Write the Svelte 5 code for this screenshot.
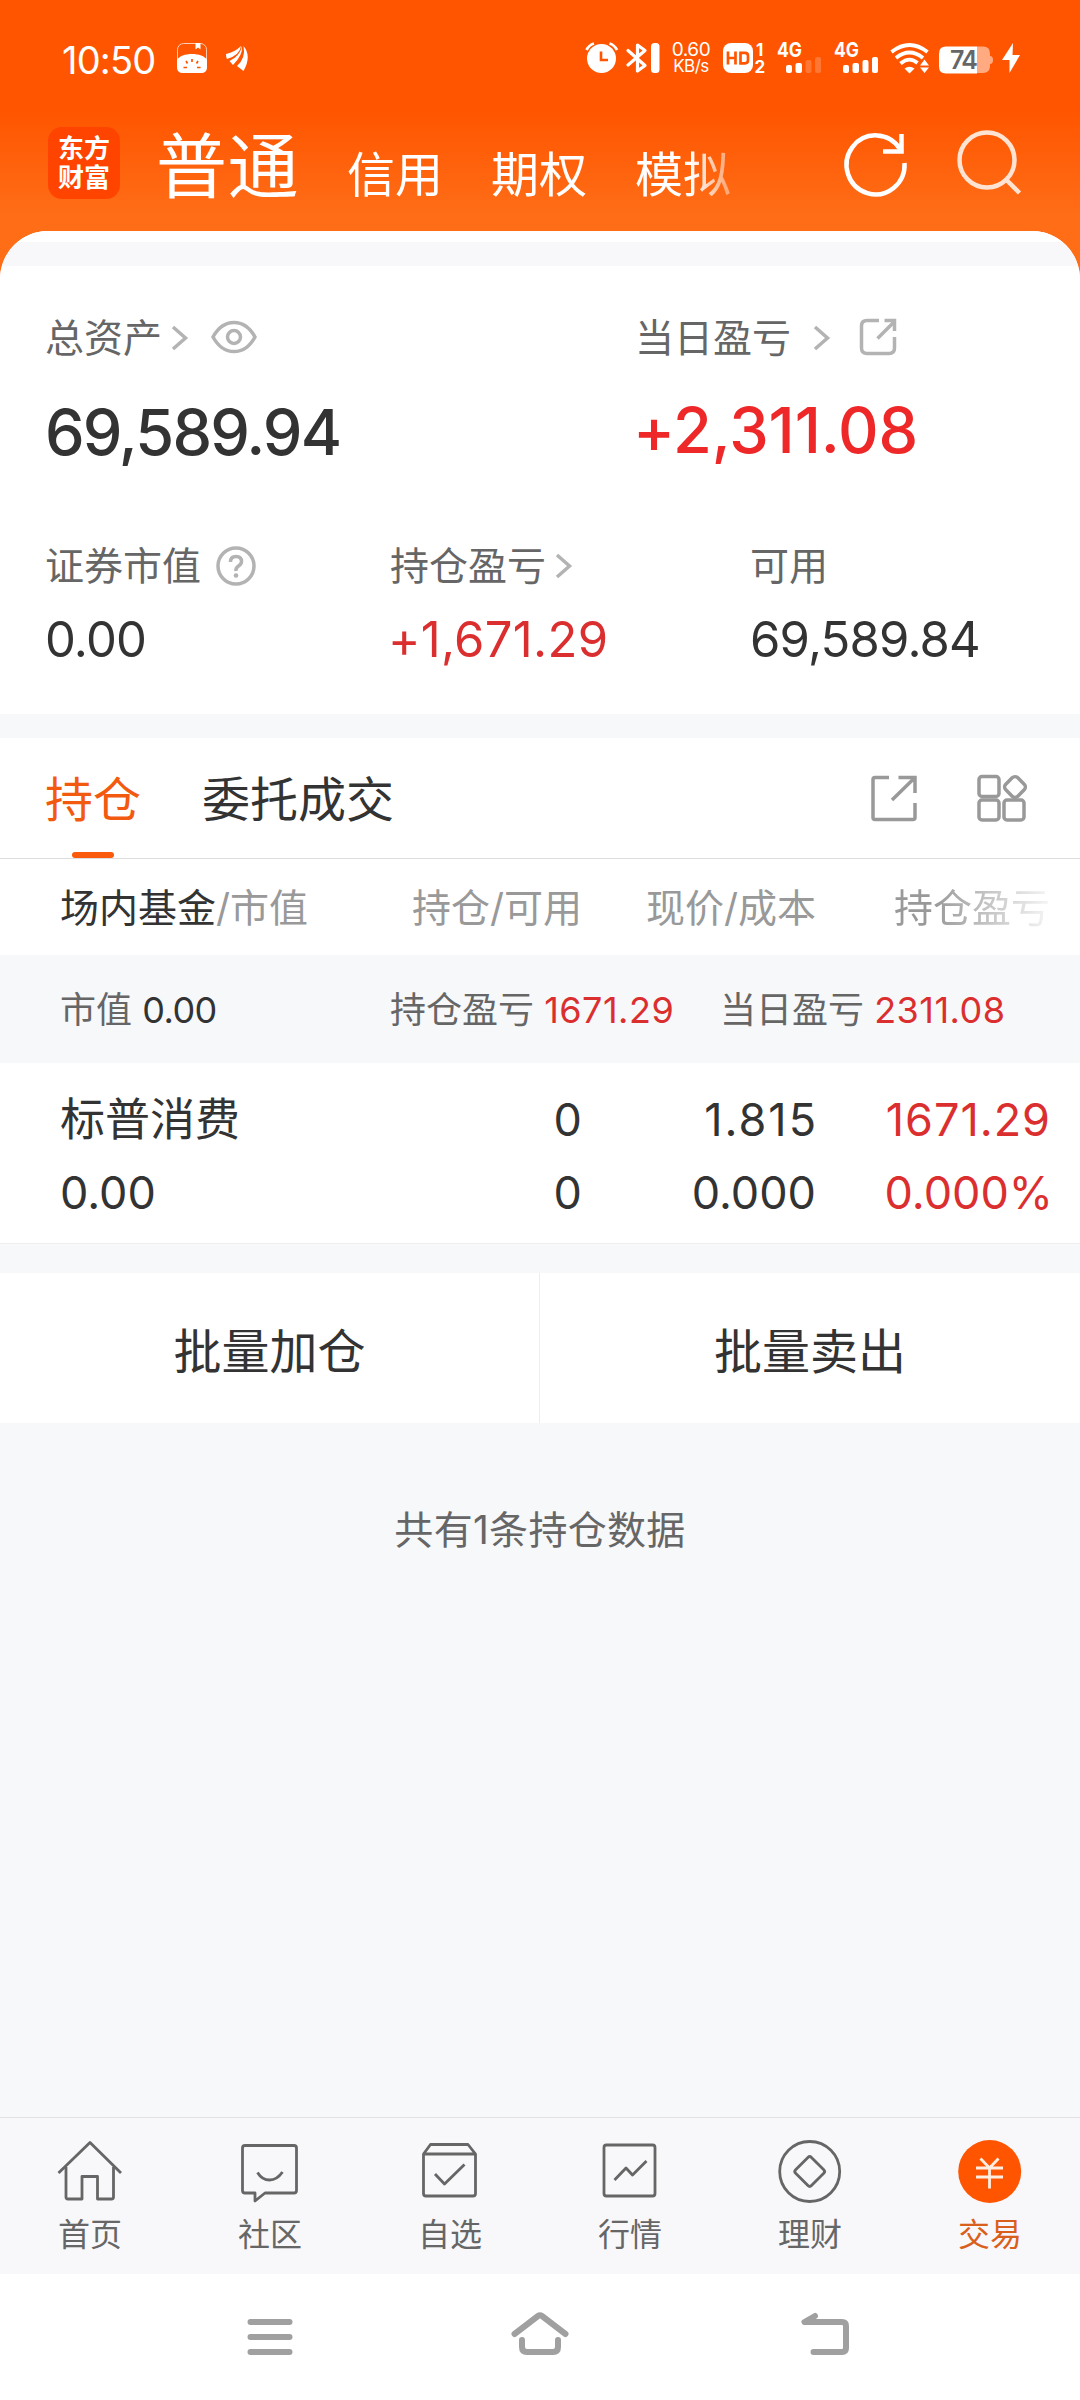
<script>
  let accounts = ['信用', '期权', '模拟'];
  let activeTab = $state('持仓');
  let activeNav = $state('交易');

  const positions = [
    { name: '标普消费', value: '0.00', held: '0', usable: '0', price: '1.815', cost: '0.000', profit: '1671.29', rate: '0.000%' }
  ];

  const navItems = ['首页', '社区', '自选', '行情', '理财', '交易'];
</script>

{#snippet chevron()}
  <svg class="chevron" width="17" height="28" viewBox="0 0 17 28">
    <path d="M2 3 L14.5 14 L2 25" />
  </svg>
{/snippet}

{#snippet signal(strength)}
  <svg class="signal" width="46" height="32" viewBox="0 0 46 32">
    <text x="0" y="15" textLength="25" lengthAdjust="spacingAndGlyphs">4G</text>
    <rect x="9" y="23" width="6" height="8" rx="2" />
    <rect x="18.5" y="21" width="6.5" height="10" rx="2" />
    <rect x="28.5" y="18" width="6" height="13" rx="2" opacity={strength > 2 ? 1 : 0.2} />
    <rect x="38" y="15" width="6" height="16" rx="2" opacity={strength > 3 ? 1 : 0.2} />
  </svg>
{/snippet}

<div class="screen">
  <header>
    <div class="status">
      <div class="status-left">
        <span class="clock">10:50</span>
        <svg class="note" width="30" height="30" viewBox="0 0 30 30">
          <rect x="0.5" y="0.5" width="29" height="29" rx="6" fill="none" stroke="#fff" stroke-opacity="0.7" />
          <path d="M18.5 0h5v6.5l-2.5-2-2.5 2z" fill="#fff" />
          <path d="M0 17C4 9 26 9 30 17v7q0 6-6 6H6q-6 0-6-6z" fill="#fff" />
          <g stroke="#ff5500" stroke-width="1.7">
            <path d="M15 16v3M9 18l1.5 2.5M21 18l-1.5 2.5M6.5 24.5H10M20 24.5h3.5" />
          </g>
        </svg>
        <svg class="wing" width="22" height="27" viewBox="0 0 22 27">
          <path d="M0 9Q9 7 15 1Q14 10 1 14Q0 13 0 9z" />
          <path d="M16 1Q17 10 7 20L3.5 16Q14 11 16 1z" />
          <path d="M17.5 1Q26 11 17.5 26L11 21Q20 13 17.5 1z" />
        </svg>
      </div>
      <div class="status-right">
        <svg class="alarm" width="34" height="32" viewBox="0 0 34 32">
          <circle cx="16.5" cy="16.5" r="14.5" fill="#fff" />
          <path d="M1.5 8Q4 3 9 1.5M24.5 1.5Q29.5 3 32 8" fill="none" stroke="#fff" stroke-width="2.8" />
          <path d="M16 9.5V18h7" fill="none" stroke="#ff5500" stroke-width="2.6" />
        </svg>
        <svg class="bluetooth" width="34" height="32" viewBox="0 0 34 32">
          <path d="M2 8.5L19 23.5L11.5 29V3L19 8.5L2 23" fill="none" stroke="#fff" stroke-width="3.2" stroke-linejoin="round" stroke-linecap="round" />
          <rect x="25" y="1" width="8.5" height="30" rx="3.5" fill="#fff" />
        </svg>
        <div class="speed"><span>0.60</span><span class="unit">KB/s</span></div>
        <svg class="hd" width="44" height="32" viewBox="0 0 44 32">
          <rect x="0" y="1" width="30" height="30" rx="8" fill="#fff" />
          <path d="M5 9.5v13M12.5 9.5v13M5 16h7.5M17.5 10.8v10.5h4.5q3 0 3-3v-4.5q0-3-3-3z" fill="none" stroke="#ff5500" stroke-width="2.7" />
          <text x="33" y="13.5">1</text>
          <text x="31.5" y="31">2</text>
        </svg>
        {@render signal(2)}
        {@render signal(4)}
        <svg class="wifi" width="40" height="32" viewBox="0 0 40 32">
          <g fill="none" stroke="#fff" stroke-width="3.8">
            <path d="M1.5 10Q19.5-4 37.5 10" />
            <path d="M6 16Q19.5 5 33 16" />
            <path d="M10.5 21.5Q19.5 14 27.5 21" />
          </g>
          <path d="M14.5 26.5Q19.5 23 24.5 26.5L19.5 31.5z" fill="#fff" />
          <path d="M30 23.5L34.5 17.5L39 23.5zM30 25.5L34.5 31L39 25.5z" fill="#fff" />
        </svg>
        <svg class="battery" width="54" height="28" viewBox="0 0 54 28">
          <path d="M38 0.5h6q7 0 7 7v2.5q3 0 3 4t-3 4v2q0 7-7 7h-6z" fill="#ffaa80" />
          <path d="M7 0.5h31v27H7q-7 0-7-7v-13q0-7 7-7z" fill="#fff" />
          <text x="11" y="22.5" textLength="28">74</text>
        </svg>
        <svg class="bolt" width="18" height="30" viewBox="0 0 18 30">
          <path d="M11 0L0 17H7.5V30L18 12H10.5z" fill="#fff" />
        </svg>
      </div>
    </div>

    <div class="topbar">
      <div class="logo"><span>东方</span><span>财富</span></div>
      <div class="accounts">
        <span class="current">普通</span>
        {#each accounts as account}
          <span>{account}</span>
        {/each}
      </div>
      <svg class="refresh" width="66" height="68" viewBox="0 0 66 68">
        <path d="M62.5 34A29 29.5 0 1 1 58 20" />
        <path d="M59.5 5V21.5M41 22.5H61.8" />
      </svg>
      <svg class="search" width="66" height="68" viewBox="0 0 66 68">
        <circle cx="31" cy="31" r="27.5" />
        <path d="M50 50.5L63.5 64" />
      </svg>
    </div>
  </header>

  <main>
    <div class="sheet-top"></div>

    <section class="assets">
      <div class="row totals">
        <div>
          <div class="label">
            总资产
            {@render chevron()}
            <svg class="eye" width="46" height="34" viewBox="0 0 46 34">
              <path d="M2 17Q10 2.5 23 2.5T44 17Q36 31.5 23 31.5T2 17z" />
              <circle cx="23" cy="17" r="6.5" />
            </svg>
          </div>
          <div class="total">69,589.94</div>
        </div>
        <div>
          <div class="label spaced">
            当日盈亏
            {@render chevron()}
            <svg class="share" width="38" height="38" viewBox="0 0 38 38">
              <path d="M20 2.5H8Q2.5 2.5 2.5 8V30Q2.5 35.5 8 35.5H30Q35.5 35.5 35.5 30V19" />
              <path d="M18.5 20.5L35 4M25.5 2.5H35.5V13" />
            </svg>
          </div>
          <div class="total today">+2,311.08</div>
        </div>
      </div>
      <div class="row details">
        <div>
          <div class="label">
            证券市值
            <svg class="help" width="40" height="40" viewBox="0 0 40 40">
              <circle cx="20" cy="20" r="18" />
              <path d="M14.5 16Q14.5 10.5 20 10.5T25.5 15.5Q25.5 18 22.5 20T20 25" />
              <circle class="dot" cx="20" cy="29.5" r="2.3" />
            </svg>
          </div>
          <div class="amount">0.00</div>
        </div>
        <div>
          <div class="label">持仓盈亏{@render chevron()}</div>
          <div class="amount up">+1,671.29</div>
        </div>
        <div>
          <div class="label">可用</div>
          <div class="amount">69,589.84</div>
        </div>
      </div>
    </section>

    <section class="holdings">
      <div class="tabs">
        {#each ['持仓', '委托成交'] as tab}
          <button class="tab" class:active={activeTab === tab} onclick={() => (activeTab = tab)}>{tab}</button>
        {/each}
        <svg class="export" width="48" height="48" viewBox="0 0 48 48">
          <path d="M19 3.5H5Q3 3.5 3 5.5V43.5Q3 45.5 5 45.5H43Q45 45.5 45 43.5V29" />
          <path d="M22 26L44 4.5M28.5 3.5H45V19" />
        </svg>
        <svg class="grid" width="50" height="48" viewBox="0 0 50 48">
          <rect x="2" y="2.5" width="20" height="20" rx="3" />
          <rect x="2" y="26" width="20" height="20" rx="3" />
          <rect x="27" y="26" width="20" height="20" rx="3" />
          <rect x="29.5" y="4.5" width="17" height="17" rx="4" transform="rotate(45 38 13)" />
        </svg>
      </div>

      <div class="table-row head">
        <span><b>场内基金</b>/市值</span>
        <span>持仓/可用</span>
        <span>现价/成本</span>
        <span class="fade">持仓盈亏</span>
      </div>

      <div class="summary">
        <span>市值 <em>0.00</em></span>
        <span>持仓盈亏 <em class="up">1671.29</em></span>
        <span>当日盈亏 <em class="up">2311.08</em></span>
      </div>

      {#each positions as item}
        <div class="position">
          <div class="table-row first">
            <span class="name">{item.name}</span>
            <span>{item.held}</span>
            <span>{item.price}</span>
            <span class="up">{item.profit}</span>
          </div>
          <div class="table-row">
            <span>{item.value}</span>
            <span>{item.usable}</span>
            <span>{item.cost}</span>
            <span class="up rate">{item.rate}</span>
          </div>
        </div>
      {/each}
    </section>

    <div class="actions">
      <button>批量加仓</button>
      <button>批量卖出</button>
    </div>

    <p class="count">共有{positions.length}条持仓数据</p>
  </main>

  <nav class="bottom">
    {#each navItems as item, i}
      <button class:active={activeNav === item} onclick={() => (activeNav = item)}>
        <svg width="72" height="72" viewBox="0 0 72 72">
          {#if i === 0}
            <path d="M4.5 38L36 7.5L67 38" />
            <path d="M12 32V62Q12 64 14 64H28V41.5H43.5V64H57.5Q59.5 64 59.5 62V32" />
          {:else if i === 1}
            <path d="M11 10.5H60Q62.5 10.5 62.5 13V55.5Q62.5 58 60 58H31L21 66V58H11Q8.5 58 8.5 55.5V13Q8.5 10.5 11 10.5z" />
            <path d="M23.5 37.5Q28 45 35.5 45T48.5 37" />
          {:else if i === 2}
            <path d="M9.5 19L16.5 9.5H54L61.5 19V58.5Q61.5 61 59 61H12Q9.5 61 9.5 58.5zM9.5 19H61.5" />
            <path d="M21 39L30.5 49L50.5 29.5" />
          {:else if i === 3}
            <rect x="10" y="10" width="51" height="51" rx="2.5" />
            <path d="M20.5 45L32 33L38.5 40L52.5 26" />
          {:else if i === 4}
            <circle cx="35.7" cy="36.5" r="30" />
            <rect x="24.5" y="25.3" width="22.4" height="22.4" rx="2.5" transform="rotate(45 35.7 36.5)" />
          {:else}
            <circle class="coin" cx="35.7" cy="36.5" r="31.5" />
            <path class="yen" d="M26.5 23.5L35.5 33L44.5 23.5M22 33H49M22 42H49M35.5 33V53.5" />
          {/if}
        </svg>
        <span>{item}</span>
      </button>
    {/each}
  </nav>

  <div class="system">
    <svg width="60" height="50" viewBox="0 0 60 50">
      <path d="M10.5 13H49.5M10.5 28H49.5M10.5 43H49.5" />
    </svg>
    <svg class="home" width="60" height="50" viewBox="0 0 60 50">
      <path d="M4.5 25L28 7Q30 5.5 32 7L55.5 25M12 31V38Q12 43 17 43H43Q48 43 48 38V31" />
    </svg>
    <svg width="60" height="50" viewBox="0 0 60 50">
      <path d="M20 7L9.5 13H47Q51 13 51 17V39Q51 43 47 43H18.5" />
    </svg>
  </div>
</div>

<style>
  :global(body) {
    margin: 0;
    background: #f7f8fa;
  }

  .screen {
    display: flex;
    flex-direction: column;
    width: 1080px;
    height: 2400px;
    overflow: hidden;
    background: #f7f8fa;
    color: #333;
    font-family: Inter, 'Noto Sans CJK SC', sans-serif;
  }

  svg {
    display: block;
    flex: none;
    overflow: visible;
  }

  button {
    padding: 0;
    border: 0;
    background: none;
    color: inherit;
    font: inherit;
  }

  header {
    height: 280px;
    margin-bottom: -49px;
    flex: none;
    background: linear-gradient(#ff5500 110px, #ff6d17 215px, #ff6d17);
    color: #fff;
  }

  .status {
    display: flex;
    justify-content: space-between;
    height: 116px;
  }

  .status-left,
  .status-right {
    display: flex;
    height: 116px;
    align-items: center;
  }

  .clock {
    width: 115px;
    padding: 4px 0 0 62px;
    font-size: 38px;
    letter-spacing: -0.8px;
    line-height: 40px;
  }

  .wing {
    margin-left: 19px;
    fill: #fff;
  }

  .status-right {
    padding-right: 60px;
  }

  .bluetooth {
    margin-left: 7px;
  }

  .speed {
    display: flex;
    flex-direction: column;
    width: 40px;
    margin-left: 11px;
    font-size: 19px;
    line-height: 17px;
    letter-spacing: -0.5px;
    align-items: center;
  }

  .speed .unit {
    font-size: 17px;
  }

  .hd {
    margin: 0 10px 0 12px;
    fill: #fff;
    font-size: 17px;
    font-weight: 700;
  }

  .signal {
    margin-right: 11px;
    fill: #fff;
    font-size: 20px;
    font-weight: 700;
  }

  .wifi {
    margin-left: -1px;
  }

  .battery {
    margin: 3px 9px 0;
    fill: #666;
    font-size: 25px;
    font-weight: 600;
  }

  .topbar {
    display: flex;
    height: 94px;
    padding: 11px 58px 0 48px;
    align-items: flex-start;
  }

  .logo {
    display: flex;
    flex-direction: column;
    width: 72px;
    height: 65px;
    padding-top: 7px;
    align-items: center;
    border-radius: 14px;
    background: #ff4400;
    font-size: 26px;
    font-weight: 700;
    line-height: 29px;
  }

  .accounts {
    display: flex;
    width: 600px;
    margin: -11px 0 0 36px;
    gap: 48px;
    align-items: baseline;
    font-size: 48px;
    line-height: 100px;
    white-space: nowrap;
    mask-image: linear-gradient(to right, #000 535px, transparent 600px);
  }

  .accounts .current {
    font-size: 71px;
    letter-spacing: 0.5px;
  }

  .refresh,
  .search {
    margin-top: 2px;
    fill: none;
    stroke: #fff;
    stroke-width: 4.5;
  }

  .refresh {
    margin-left: 86px;
  }

  .search {
    margin-left: auto;
    stroke: #ffe3d2;
  }

  main {
    flex: 1;
    min-height: 0;
    overflow: hidden;
    border-radius: 48px 48px 0 0;
    background: #f7f8fa;
  }

  .sheet-top {
    height: 24px;
    border-top: 11px solid #fff;
    background: #f8f8fa;
  }

  .assets {
    height: 404px;
    padding: 44px 0 0 45px;
    background: #fff;
  }

  .row {
    display: grid;
    height: 228px;
  }

  .totals {
    grid-template-columns: 590px 1fr;
  }

  .details {
    grid-template-columns: 345px 360px 1fr;
  }

  .label {
    display: flex;
    height: 56px;
    align-items: center;
    color: #666;
    font-size: 39px;
    line-height: 56px;
  }

  .label svg {
    fill: none;
    stroke: #b3b3b3;
    stroke-width: 3.5;
  }

  .label .chevron {
    margin-left: 9px;
  }

  .label.spaced .chevron {
    margin-left: 22px;
  }

  .label .eye {
    margin: -3px 0 0 23px;
  }

  .label .share {
    margin: -2px 0 0 29px;
  }

  .label .help {
    margin-left: 15px;
  }

  .label .dot {
    fill: #b3b3b3;
    stroke: none;
  }

  .total {
    margin-top: 38px;
    font-size: 63px;
    font-weight: 550;
    line-height: 56px;
    letter-spacing: -1.9px;
  }

  .total.today {
    margin: 36px 0 0 -2px;
    color: #ee2828;
    letter-spacing: -0.1px;
  }

  .amount {
    margin-top: 18px;
    font-size: 49px;
    line-height: 56px;
    letter-spacing: -0.8px;
  }

  .amount.up {
    margin-left: -2px;
    letter-spacing: 0.3px;
  }

  .up {
    color: #db2f2f;
  }

  .holdings {
    margin-top: 24px;
    background: #fff;
  }

  .tabs {
    display: flex;
    height: 120px;
    padding: 0 53px 0 45px;
    align-items: center;
    border-bottom: 1px solid #ddd;
    font-size: 48px;
  }

  .tab {
    position: relative;
    height: 120px;
    margin-right: 61px;
    line-height: 124px;
  }

  .tab.active {
    color: #f25a10;
  }

  .tab.active::after {
    content: '';
    position: absolute;
    bottom: 0;
    left: 27px;
    width: 42px;
    height: 6px;
    border-radius: 3px;
    background: #fb5a0c;
  }

  .export,
  .grid {
    margin-left: auto;
    fill: none;
    stroke: #999;
    stroke-width: 3.5;
  }

  .grid {
    margin-left: 59px;
  }

  .table-row {
    display: grid;
    grid-template-columns: 322px 200px 234px 234px;
    padding: 0 30px 0 60px;
    text-align: right;
    font-size: 45px;
    line-height: 73px;
    white-space: nowrap;
  }

  .table-row span:first-child {
    text-align: left;
  }

  .first span:nth-child(3) {
    letter-spacing: 2px;
    margin-right: -2px;
  }

  .first .up {
    letter-spacing: 1px;
    margin-right: -1px;
  }

  .rate {
    margin-right: -3px;
  }

  .head {
    height: 96px;
    color: #999;
    font-size: 39px;
    line-height: 98px;
  }

  .head b {
    color: #333;
    font-weight: 400;
  }

  .fade {
    mask-image: linear-gradient(to right, #000 50%, transparent 105%);
  }

  .summary {
    display: grid;
    grid-template-columns: 330px 330px 1fr;
    height: 108px;
    padding-left: 60px;
    background: #f7f8fa;
    color: #666;
    font-size: 36px;
    line-height: 111px;
  }

  .summary em {
    color: #333;
    font-style: normal;
    letter-spacing: -0.5px;
  }

  .summary .up {
    color: #db2f2f;
    letter-spacing: 0.5px;
  }

  .position {
    height: 160px;
    padding-top: 20px;
    border-bottom: 1px solid #eee;
  }

  .actions {
    display: flex;
    height: 150px;
    margin-top: 29px;
    background: #fff;
    font-size: 48px;
  }

  .actions button {
    width: 539px;
    padding-bottom: 1px;
  }

  .actions button + button {
    width: 541px;
    border-left: 1px solid #eee;
  }

  .count {
    margin: 82px 0 0;
    color: #666;
    font-size: 39px;
    line-height: 50px;
    letter-spacing: 0.3px;
    text-align: center;
  }

  .bottom {
    display: flex;
    flex: none;
    height: 156px;
    border-top: 1px solid #e2e2e4;
    background: #f8f8fa;
    color: #666;
  }

  .bottom button {
    display: flex;
    flex: 1;
    flex-direction: column;
    padding-top: 17px;
    align-items: center;
    font-size: 32px;
    line-height: 56px;
  }

  .bottom svg {
    fill: none;
    stroke: #666;
    stroke-width: 2.8;
    stroke-linejoin: round;
  }

  .bottom .active {
    color: #d9601c;
  }

  .bottom .coin {
    fill: #ff5500;
    stroke: none;
  }

  .bottom .yen {
    stroke: #ffeee0;
  }

  .system {
    display: flex;
    flex: none;
    height: 91px;
    padding: 35px 0 0 240px;
    background: #fff;
  }

  .system svg {
    fill: none;
    stroke: #a0a0a0;
    stroke-width: 6;
    stroke-linecap: round;
    stroke-linejoin: round;
  }

  .system .home {
    margin: 0 225px 0 210px;
  }
</style>
